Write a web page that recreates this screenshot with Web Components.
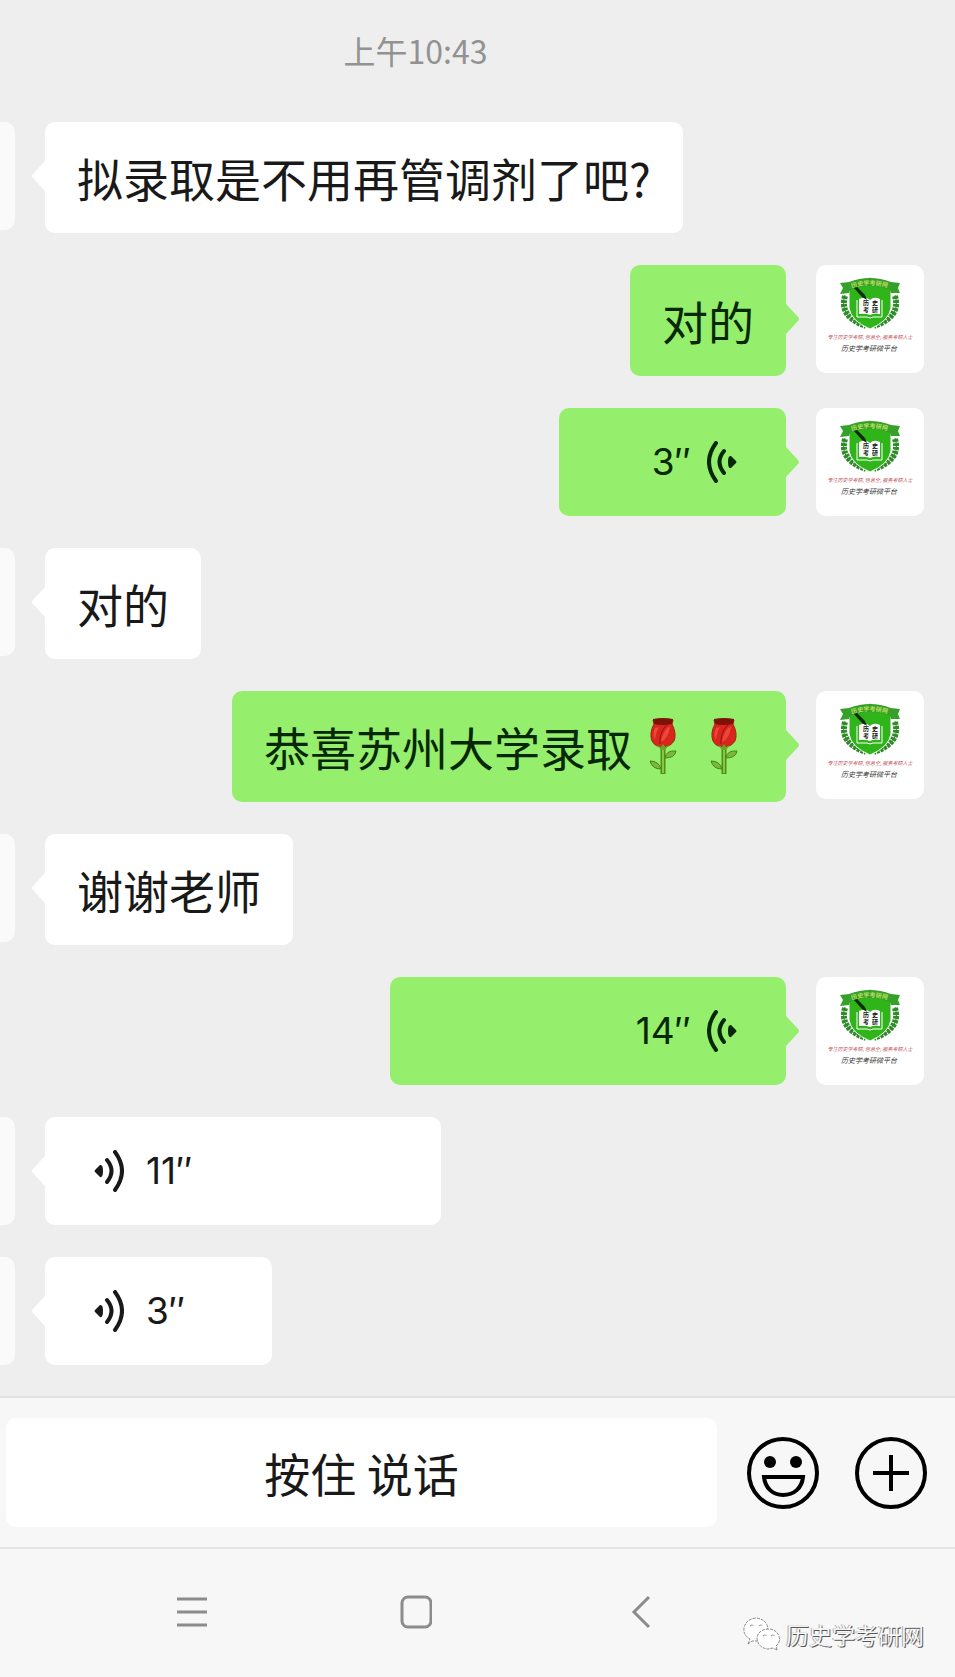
<!DOCTYPE html>
<html lang="zh-CN">
<head>
<meta charset="utf-8">
<meta name="viewport" content="width=device-width, initial-scale=1">
<title>聊天</title>
<style>
body{
  margin: 0;
  background: #eeeeee;
  color: #191919;
  font-family: "Noto Sans CJK SC", sans-serif;
}
</style>
</head>
<body>
<chat-screen>
  <chat-time>上午10:43</chat-time>
  <chat-message>拟录取是不用再管调剂了吧?</chat-message>
  <chat-message mine>对的</chat-message>
  <chat-message mine><voice-note length="short" mine>3″</voice-note></chat-message>
  <chat-message>对的</chat-message>
  <chat-message mine>恭喜苏州大学录取<rose-emoji></rose-emoji><rose-emoji></rose-emoji></chat-message>
  <chat-message>谢谢老师</chat-message>
  <chat-message mine><voice-note length="long" mine>14″</voice-note></chat-message>
  <chat-message><voice-note length="long">11″</voice-note></chat-message>
  <chat-message><voice-note length="short">3″</voice-note></chat-message>
  <chat-composer slot="footer">按住 说话</chat-composer>
  <phone-nav slot="footer"><account-mark>历史学考研网</account-mark></phone-nav>
</chat-screen>

<script>
function define(name, html, setup){
  const template = document.createElement('template');
  template.innerHTML = html;
  customElements.define(name, class extends HTMLElement{
    constructor(){
      super();
      this.attachShadow({mode: "open"});
      this.shadowRoot.appendChild(template.content.cloneNode(true));
      if(setup) setup(this, this.shadowRoot);
    }
  });
}

define("chat-screen", `
<style>
:host{
  display: flex;
  flex-direction: column;
  min-height: 100vh;
}
main{
  flex: 1;
  display: flex;
  flex-direction: column;
  gap: 32px;
  padding: 26px 0 31px;
  overflow: hidden;
}
</style>
<main><slot></slot></main>
<slot name="footer"></slot>`);

define("chat-time", `
<style>
:host{
  display: block;
  padding: 0 124px 16px 0;
  text-align: center;
  font-size: 32px;
  line-height: 48px;
  color: #929292;
}
</style>
<slot></slot>`);

define("chat-avatar", `
<style>
:host{
  display: block;
  flex: none;
  width: 108px;
  height: 108px;
  border-radius: 10px;
  background: #fafafa;
  overflow: hidden;
}
:host([crest]){
  background: #fff;
}
:host(:not([crest])) svg{
  display: none;
}
svg{
  display: block;
}
</style>
<svg width="108" height="108" viewBox="0 0 108 108" aria-label="历史学考研网">
  <defs>
    <path id="ribbon" d="M33 24Q54 16 75 24"/>
  </defs>
  <!-- laurel -->
  <g fill="none" stroke="#2f8a2a">
    <path stroke-width="1" d="M29 30Q22 52 49 61M79 30Q86 52 59 61"/>
    <path stroke-width="6" stroke-dasharray="3 1" d="M29 31Q23 52 50 61M79 31Q85 52 58 61"/>
  </g>
  <!-- shield -->
  <path fill="#2fb41a" stroke="#fff" stroke-width="1" d="M33 17Q44 18 54 12Q64 18 75 17V43Q73 56 54 64Q35 56 33 43Z"/>
  <!-- ribbon -->
  <path fill="#36a12a" d="M24 18L33 17Q54 9 75 17L84 18L82 23L84 28L75 28L74 25Q54 17 34 25L33 28L24 29L27 23Z"/>
  <text font-size="6" font-weight="700" fill="#b9dc5e"><textPath href="#ribbon" startOffset="3">历史学考研网</textPath></text>
  <!-- book -->
  <path fill="#2fb41a" stroke="#fff" stroke-width="1" d="M41 35V52H51L54 53L57 52H66V35"/>
  <path fill="#fff" d="M43 34Q50 31 54 35Q58 31 64 34V49Q58 48 54 50Q49 48 43 49Z"/>
  <g font-size="6" font-weight="700" fill="#102010">
    <text x="47" y="40">历</text><text x="56" y="40">史</text>
    <text x="47" y="47">考</text><text x="56" y="47">研</text>
  </g>
  <path fill="#0b2b0b" d="M38 23L41 22L49 30L51 35L46 32Z"/>
  <g text-anchor="middle" font-style="italic">
    <text x="54" y="74" font-size="5" fill="#c05058">专注历史学考研, 信息全, 服务考研人士</text>
    <text x="53" y="86" font-size="7" fill="#333">历史学考研微平台</text>
  </g>
</svg>`);

define("chat-message", `
<style>
:host{
  display: flex;
  align-items: flex-start;
  --bubble: #fff;
}
:host([mine]){
  flex-direction: row-reverse;
  padding-right: 31px;
  color: #062806;
  --bubble: #95ee6c;
}
/* the other side's pictures hang over the left edge */
:host(:not([mine])) chat-avatar{
  margin-left: -93px;
}
.tail{
  display: block;
  flex: none;
  width: 14px;
  height: 30px;
  margin: 39px 0 0 16px;
  fill: var(--bubble);
}
:host([mine]) .tail{
  transform: scaleX(-1);
  margin: 39px 16px 0 0;
}
.bubble{
  display: flex;
  align-items: center;
  box-sizing: border-box;
  min-height: 108px;
  border-radius: 10px;
  background: var(--bubble);
}
.bubble.text{
  min-height: 111px;
  padding: 0 32px 2px;
  font-size: 46px;
  line-height: 64px;
}
</style>
<chat-avatar></chat-avatar>
<svg class="tail" viewBox="0 0 14 30"><path d="M14 0V30L2 17Q0 15 2 13Z"/></svg>
<div class="bubble"><slot></slot></div>`, (host, root) => {
  if(host.hasAttribute("mine"))
    root.querySelector("chat-avatar").setAttribute("crest", "");
  if(!host.querySelector("voice-note"))
    root.querySelector(".bubble").classList.add("text");
});

define("voice-note", `
<style>
:host{
  display: block;
}
button{
  display: flex;
  align-items: center;
  gap: 22px;
  width: 227px;
  height: 108px;
  padding: 0 49px;
  border: 0;
  background: none;
  color: inherit;
  font-family: Inter, "Noto Sans CJK SC", sans-serif;
  font-size: 37px;
  line-height: 48px;
}
:host([length=long]) button{
  width: 396px;
}
:host([mine]) button{
  flex-direction: row-reverse;
  gap: 16px;
}
:host([mine]) svg{
  transform: scaleX(-1);
}
svg{
  flex: none;
}
</style>
<button type="button">
  <svg width="30" height="42" viewBox="0 0 30 42">
    <path fill="currentColor" d="M1 20L6 15Q9 14 9 21Q9 28 6 27L1 22Q0 21 1 20Z"/>
    <path fill="none" stroke="currentColor" stroke-width="4" stroke-linecap="round" d="M13 10Q22 21 13 32M21 2Q35 21 21 40"/>
  </svg>
  <span><slot></slot></span>
</button>`);

define("rose-emoji", `
<style>
:host{
  display: inline-block;
  width: 61px;
  height: 56px;
  vertical-align: middle;
}
svg{
  display: block;
  margin: auto;
}
</style>
<svg width="28" height="56" viewBox="0 0 28 56" role="img" aria-label="玫瑰">
  <path fill="none" stroke="#4f8f1d" stroke-width="5" d="M14 28V56"/>
  <path fill="none" stroke="#8cc63e" stroke-width="2" d="M14 28V55"/>
  <path fill="#7fb53c" stroke="#3f8a18" stroke-width="1" d="M16 40Q17 32 27 33Q26 40 16 40ZM12 51Q10 43 1 43Q3 51 12 51Z"/>
  <path fill="#d9261c" stroke="#9c2a10" stroke-width="1" d="M4 2Q14 0 24 2L23 6Q28 16 25 23Q21 29 14 29Q6 29 3 23Q0 15 5 6Z"/>
  <path fill="#7c1208" d="M4 1Q14 -1 24 1L23 6Q14 8 5 6Z"/>
  <path fill="#ee463a" d="M6 10Q3 17 6 22Q7 14 10 9ZM21 8Q14 12 12 24Q20 20 21 8Z"/>
  <path fill="none" stroke="#8e170d" stroke-width="1" d="M18 7Q10 14 11 26"/>
  <path fill="#6aa52a" d="M8 27L12 29L14 26L16 29L20 27L16 32H12Z"/>
</svg>`);

define("chat-composer", `
<style>
:host{
  display: flex;
  align-items: center;
  gap: 36px;
  padding: 20px 28px 20px 6px;
  border-top: 2px solid #e2e2e2;
  border-bottom: 2px solid #e6e6e6;
  background: #f7f7f7;
}
button{
  padding: 0;
  border: 0;
  background: none;
  color: inherit;
}
.talk{
  flex: 1;
  height: 109px;
  margin-right: -6px;
  padding-bottom: 2px;
  border-radius: 10px;
  background: #fff;
  font: inherit;
  font-size: 46px;
  line-height: 64px;
}
svg{
  display: block;
  fill: none;
  stroke: #000;
  stroke-width: 4;
}
</style>
<button class="talk" type="button"><slot></slot></button>
<button type="button" aria-label="表情">
  <svg width="72" height="72" viewBox="0 0 72 72">
    <circle cx="36" cy="36" r="34"/>
    <circle cx="23" cy="25" r="6" fill="#000" stroke="none"/>
    <circle cx="49" cy="25" r="6" fill="#000" stroke="none"/>
    <path d="M17 40H56C55 51 47 58 36 58C26 58 18 51 17 40Z"/>
  </svg>
</button>
<button type="button" aria-label="更多">
  <svg width="72" height="72" viewBox="0 0 72 72">
    <circle cx="36" cy="36" r="34"/>
    <path d="M36 18V54M18 36H54"/>
  </svg>
</button>`);

define("phone-nav", `
<style>
:host{
  position: relative;
  display: flex;
  justify-content: center;
  gap: 192px;
  padding: 46px 124px 48px 0;
  background: #f7f7f7;
}
button{
  padding: 0;
  border: 0;
  background: none;
}
svg{
  display: block;
  fill: none;
  stroke: #8c8c8c;
  stroke-width: 3;
}
::slotted(account-mark){
  position: absolute;
  right: 31px;
  bottom: 26px;
}
</style>
<button type="button" aria-label="菜单"><svg width="32" height="34" viewBox="0 0 32 34"><path d="M1 4H31M1 17H31M1 30H31"/></svg></button>
<button type="button" aria-label="主页"><svg width="32" height="34" viewBox="0 0 32 34"><rect x="2" y="2" width="29" height="30" rx="6"/></svg></button>
<button type="button" aria-label="返回"><svg width="32" height="34" viewBox="0 0 32 34"><path d="M25 2L10 17L25 32"/></svg></button>
<slot></slot>`);

define("account-mark", `
<style>
:host{
  display: flex;
  align-items: center;
  gap: 6px;
  font-size: 23px;
  line-height: 34px;
  color: #f7f7f7;
  text-shadow: 1px 1px 0 #555, -1px 0 0 #aaa;
}
svg{
  fill: #fff;
  stroke: #888;
  stroke-width: 1;
  stroke-dasharray: 3 1;
}
</style>
<svg width="37" height="34" viewBox="0 0 37 34">
  <path d="M5 27L7 22Q0 18 1 11Q3 2 13 1Q23 2 25 11L14 24L9 24Z"/>
  <path d="M34 33L33 29Q38 25 36 19Q33 12 25 12Q15 13 14 21Q15 31 25 32L30 31Z"/>
  <path fill="none" d="M7 9Q9 7 11 9M16 9Q18 7 20 9M20 19Q22 17 24 19M28 19Q30 17 32 19"/>
</svg>
<span><slot></slot></span>`);
</script>
</body>
</html>
